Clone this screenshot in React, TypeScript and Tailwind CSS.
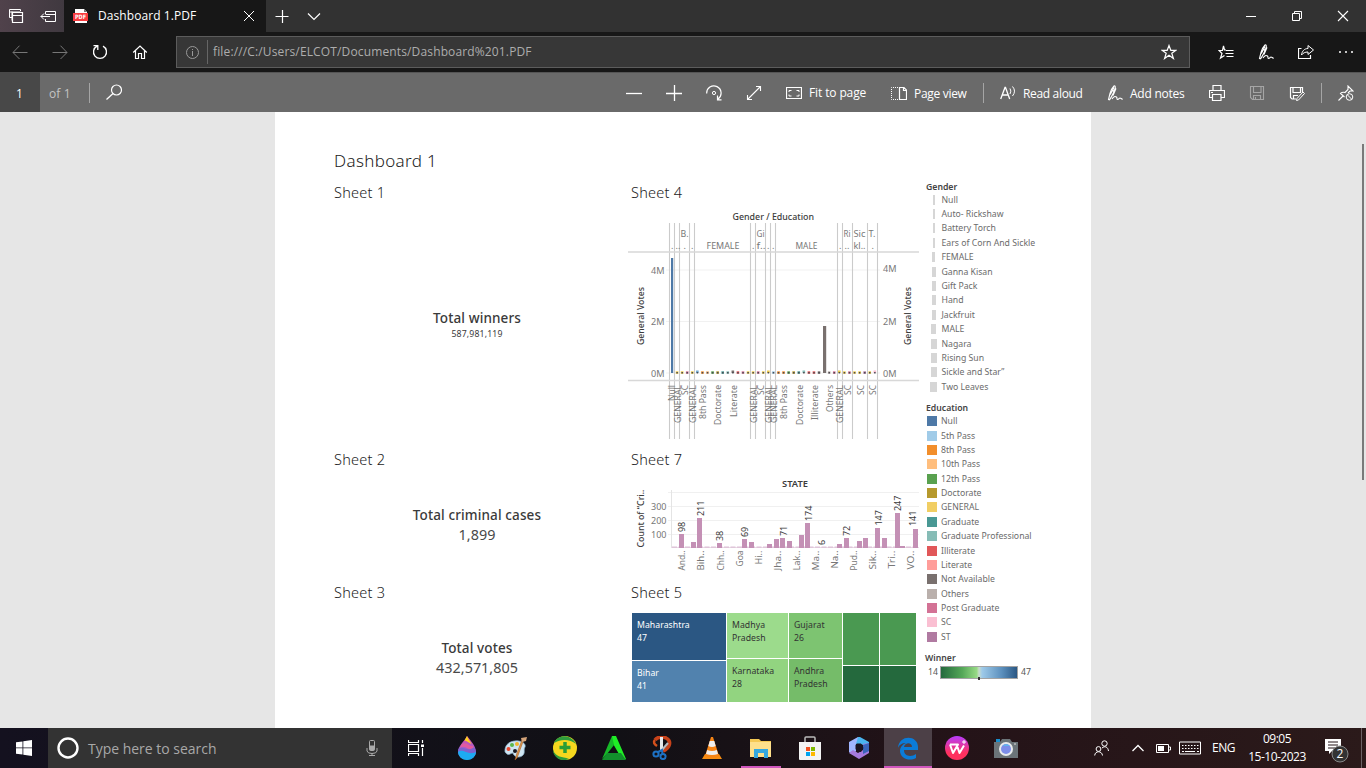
import React from "react";

type Kids = { children?: React.ReactNode };

function Ico({ s = 16, c = "", children }: Kids & { s?: number; c?: string }) {
  return (
    <svg width={s} height={s} viewBox={`0 0 ${s} ${s}`} className={`block shrink-0 ${c}`} fill="none" stroke="currentColor" strokeWidth={1}>
      {children}
    </svg>
  );
}

function PenIcon() {
  return (
    <Ico>
      <path d="M2.5 15 L1.5 14.5 L3 8.5 C4 5 5.500 2.500 7 1 C8.500 .5 8.500 2.500 8 4 C7 7.500 5 11 2.500 15 M3.300 9.500 L7 2.500 M6 6.500 L9 3.500 L6 10.500 M5 14 C6.500 11.500 8 11 9.500 12 C10.500 13 9.500 14.500 10.500 14.500 C12 14.500 12 13 13 13 C14 13 14.500 14.500 15.700 14" strokeWidth="1.1" />
    </Ico>
  );
}

function TabBar() {
  return (
    <div className="flex h-8 items-center bg-[#323232] text-white">
      <div className="flex h-8 w-16 items-center bg-gradient-to-r from-[#50424b] to-[#403940] pl-2">
        <Ico>
          <path d="M4.500 9.500 H1.500 V1.500 H12.500 V3 M1.500 4 H12.500 M4 3.500 V12.500 H4.500" />
          <path d="M4.500 4.500 H14.500 V14.500 H4.500 Z M4.500 7.500 H14.500" strokeWidth="1.2" />
        </Ico>
        <Ico c="ml-4">
          <path d="M5.500 6 V3.500 H15.500 V13.500 H5.500 V11 M5.500 6.500 H15.500 M.7 8.500 H10 M4 5.500 L1 8.500 L4 11.500" />
        </Ico>
      </div>
      <div className="flex h-8 w-[202px] items-center bg-[#171717] pl-[9px]">
        <svg width="16" height="16" viewBox="0 0 16 16">
          <path d="M2 1 H11 L14 4 V15 H2Z" fill="#fff" />
          <path d="M11 1 V4 H14" fill="#777" />
          <rect x="0" y="5" width="15" height="8" fill="#f93b3e" />
          <text x="2" y="11.300" fontSize="6" fontWeight="700" fontFamily="DejaVu Sans" fill="#fff" textLength="11" lengthAdjust="spacingAndGlyphs">PDF</text>
        </svg>
        <span className="ml-[9px] w-[145px] whitespace-nowrap text-[12px] leading-8 tracking-[0.08px]">Dashboard 1.PDF</span>
        <Ico s={12}><path d="M1 1 L11 11 M11 1 L1 11" /></Ico>
      </div>
      <Ico c="ml-2"><path d="M1.500 8.500 H14.500 M8.500 2 V15" strokeWidth="1.200" /></Ico>
      <Ico c="ml-4"><path d="M2 5.500 L8 11.500 L14 5.500" strokeWidth="1.200" /></Ico>
      <div className="flex-1" />
      <div className="flex items-center gap-[34px] pr-[17px]">
        <Ico s={12}><path d="M1 6.500 H11" /></Ico>
        <Ico s={12}><path d="M1.500 3.500 H8.500 V10.500 H1.500Z M3.500 3 V1.500 H10.500 V8.500 H9" /></Ico>
        <Ico s={12}><path d="M1 1 L11 11 M11 1 L1 11" strokeWidth="1.100" /></Ico>
      </div>
    </div>
  );
}

function NavBar() {
  return (
    <div className="flex h-10 items-center bg-[#171717] pl-3 text-white">
      <div className="flex w-[164px] gap-6">
        <Ico c="text-[#777]"><path d="M1 8.500 H15.500 M7.500 1.700 L1 8.500 L7.500 15" /></Ico>
        <Ico c="text-[#777]"><path d="M.5 8.500 H15 M8.500 1.700 L15 8.500 L8.500 15" /></Ico>
        <Ico><path d="M5 2.200 A6.500 6.500 0 1 0 11 2.200 M1.500 1.700 H5.800 V6" strokeWidth="1.300" /></Ico>
        <Ico><path d="M1.200 8.500 L8 2 L14.800 8.500 M3.500 6.500 V14.500 H6.500 V9.500 H9.500 V14.500 H12.500 V6.500" strokeWidth="1.200" /></Ico>
      </div>
      <div className="flex h-8 w-[1014px] items-center border border-[#5c5c5c] bg-[#373737] pl-2">
        <Ico s={15} c="text-[#999]"><circle cx="7.500" cy="7.500" r="6" /><path d="M7.500 6 V11 M7.500 4 V5" /></Ico>
        <div className="ml-[7px] h-6 w-px bg-[#666]" />
        <span className="ml-[5px] flex-1 text-[12px] tracking-[0.14px] text-[#adadad]">file:///C:/Users/ELCOT/Documents/Dashboard%201.PDF</span>
        <Ico c="mr-3"><path d="M8 1.500 L9.800 6.300 H15 L10.800 9.300 L12.400 14.500 L8 11.300 L3.600 14.500 L5.200 9.300 L1 6.300 H6.200Z" strokeWidth="1.200" /></Ico>
      </div>
      <div className="ml-7 flex items-center gap-6">
        <Ico>
          <path d="M8 6 H6.500 L5.500 2 L4.500 6.500 H1 L4 9.500 L2.500 14 L6.500 11.500" strokeWidth="1.200" />
          <path d="M8 6.500 H15.500 M7.500 9.500 H15.500 M8.500 12.500 H15.500" strokeWidth="1.200" />
        </Ico>
        <PenIcon />
        <Ico>
          <path d="M3.500 4.500 H.5 V14.500 H12.500 V11" strokeWidth="1.200" />
          <path d="M3.500 11 C4 7 6.500 4.500 10 4.500 V1.500 L15.500 6 L10 10.500 V8 C7 8 5 9 3.500 11Z" />
        </Ico>
        <Ico><path d="M1 8 H3 M7 8 H9 M13 8 H15" strokeWidth="1.500" /></Ico>
      </div>
    </div>
  );
}

function PdfBar() {
  return (
    <div className="flex h-10 items-center bg-[#6a6a6a] text-[12px] text-white shadow-[inset_0_1px_0_#555]">
      <div className="flex h-10 w-10 items-center justify-center bg-[#484848] pr-px pt-[3px]">1</div>
      <span className="ml-[9px] w-10 pt-[3px] tracking-[0.15px] text-[#c4c4c4]">of 1</span>
      <div className="mt-[2px] h-5 w-px bg-[#a5a5a5]" />
      <Ico c="ml-4"><circle cx="10.500" cy="6" r="5" strokeWidth="1.200" /><path d="M7 9.500 L.5 15.500" strokeWidth="1.300" /></Ico>
      <div className="flex-1" />
      <div className="mt-[2px] flex items-center gap-6">
        <Ico><path d="M0 8.500 H16" strokeWidth="1.300" /></Ico>
        <Ico><path d="M0 8.500 H16 M8.500 0 V16" strokeWidth="1.300" /></Ico>
        <Ico>
          <path d="M.7 8.500 A7.200 7.200 0 1 1 12 14 M11.500 10.500 V14.800 H15.500" strokeWidth="1.200" />
          <circle cx="8" cy="8" r="1.600" />
        </Ico>
        <Ico><path d="M1.500 14.500 L14.500 1.500 M10 1.500 H14.500 V6 M1.500 10 V14.500 H6" strokeWidth="1.100" /></Ico>
        <Ico>
          <path d="M.5 2.500 H15.500 V13.500 H.5Z" strokeWidth="1.200" />
          <path d="M3 7 V5.500 H5.500 M10.500 5.500 H13 V7 M3 9.500 V11 H5.500 M10.500 11 H13 V9.500" />
        </Ico>
      </div>
      <span className="ml-[7px] mt-[2px] w-[82px] tracking-[-0.12px]">Fit to page</span>
      <Ico c="mt-[2px]">
        <path d="M7 2.500 H.5 V14.500 H7" strokeDasharray="1 1" />
        <path d="M8.500 2.500 H13 L15.500 5 V14.500 H8.500Z M12.500 2.500 V5.500 H15.500" strokeWidth="1.200" />
      </Ico>
      <span className="ml-[7px] mt-[4px] w-[69px] tracking-[-0.3px]">Page view</span>
      <div className="mt-[2px] h-5 w-px bg-[#a5a5a5]" />
      <Ico c="ml-4 mt-[2px]">
        <path d="M.7 14 L5 2.500 H5.500 L9.700 14 M2.300 10 H8.200" strokeWidth="1.300" />
        <path d="M10 3.500 Q11.700 6 10 9 M12.500 1.500 Q16.500 6 12.500 11" />
      </Ico>
      <span className="ml-[7px] mt-[4px] w-[84px] tracking-[-0.33px]">Read aloud</span>
      <div className="mt-[2px]"><PenIcon /></div>
      <span className="ml-[7px] mt-[4px] w-[79px] tracking-[-0.25px]">Add notes</span>
      <div className="mt-[2px] flex items-center gap-6">
        <Ico><path d="M4 5.500 V.5 H12 V5.500 M3.500 12.500 H.5 V5.500 H15.500 V12.500 H12 M3.500 9.500 H12 V15.500 H3.500Z M2 7.500 H4" strokeWidth="1.200" /></Ico>
        <Ico c="text-[#a5a5a5]"><path d="M1.500 1.500 H14.500 V14.500 H3.500 L1.500 12.500Z M4.500 1.500 V7.500 H12 V1.500 M4.500 14.500 V10.500 H11.500 V14.500 M6.500 12 V14.500" strokeWidth="1.100" /></Ico>
        <Ico>
          <path d="M13.500 7 V2.500 H1.500 V12.500 L3 14 H7 M4 2.500 V7.500 H11.500 V2.500 M4.500 14 V10.500 H9" strokeWidth="1.200" />
          <path d="M14 7 L15.500 8.500 L9.500 15 L7.500 15.500 L8 13.500Z" />
        </Ico>
      </div>
      <div className="ml-4 mt-[2px] h-5 w-px bg-[#a5a5a5]" />
      <Ico c="ml-4 mr-3 mt-[2px]">
        <path d="M.5 15.500 L5 11 M6.500 12 L2.500 8.500 C4 7 5.500 7 7 7.500 L10 4.500 V1 L15 6 H12 L10 8" strokeWidth="1.100" />
        <circle cx="11.500" cy="12" r="3.300" /><path d="M9.300 9.800 L13.700 14.200" />
      </Ico>
    </div>
  );
}

type Txt = { t: string; x: number; y: number; len?: number; size?: number; fill?: string; weight?: number };
const V = ({ t, x, y, len, size = 9, fill = "#777", weight, anchor = "start" }: Txt & { anchor?: "start" | "end" }) => (
  <text transform={`translate(${x} ${y}) rotate(-90)`} fontSize={size} fill={fill} fontWeight={weight} textAnchor={anchor} textLength={len} lengthAdjust="spacingAndGlyphs">{t}</text>
);
const H = ({ t, x, y, len, size = 9, fill = "#777", weight }: Txt) => (
  <text x={x} y={y} fontSize={size} fill={fill} fontWeight={weight} textLength={len} lengthAdjust="spacingAndGlyphs">{t}</text>
);

const dividers = [669.5, 674.5, 679.5, 689.5, 694.5, 750.5, 755.5, 765.5, 770.5, 775.5, 837.5, 842.5, 852.5, 867.5, 877.5];
const dotColors = "#4e79a7 #edc948 #edc948 #d37295 #edc948 #6fa8d0 #f28e2b #f0b070 #59a14f #b6992d #499894 #86bcb6 #79706e #e15759 #d37295 #edc948 #edc948 #d37295 #edc948 #edc948 #a0cbe8 #f28e2b #f28e2b #59a14f #b6992d #499894 #86bcb6 #e15759 #e15759 #79706e #79706e #bab0ac #d37295 #edc948 #edc948 #d37295 #edc948 #edc948 #b07aa1 #edc948 #fabfd2".split(" ");
const eduTicks: [string, number, number][] = [
  ["Null", 675, 16], ["GENERAL", 681, 38], ["SC", 688, 10], ["GENERAL", 695.5, 38], ["8th Pass", 706, 34], ["Doctorate", 721, 40], ["Literate", 737, 32],
  ["GENERAL", 756.5, 38], ["SC", 764, 10], ["GENERAL", 771.5, 38], ["GENERAL", 777, 38], ["8th Pass", 787, 34], ["Doctorate", 802.5, 40], ["Illiterate", 818, 35],
  ["Others", 833, 27], ["GENERAL", 843, 38], ["SC", 850.5, 10], ["SC", 863.5, 10], ["SC", 876, 10],
];
const heads: [string, number, number, number?][] = [
  [".", 671, 249], ["..", 675.5, 249], ["B.", 680.5, 236.5, 8], [".", 683.5, 249], [".", 691, 249], ["FEMALE", 706.5, 249, 33], [".", 752, 249],
  ["Gi", 756.5, 236.5, 8], ["f..", 756.5, 249, 9], [".", 767, 249], [".", 772, 249], ["MALE", 795.5, 249, 22], [".", 839, 249],
  ["Ri", 843.5, 236.5, 7], ["..", 844.5, 249], ["Sic", 853.5, 236.5, 12], ["kl..", 853.5, 249, 12], ["T.", 868.5, 236.5, 7], [".", 871.5, 249],
];
const votesAxis: [string, number, number][] = [["4M", 651, 274], ["2M", 651, 325], ["0M", 651, 377], ["4M", 883, 272], ["2M", 883, 324.5], ["0M", 883, 377]];

function VotesChart() {
  return (
    <svg width="294" height="245" viewBox="628 204 294 245" className="block font-['Noto_Sans']">
      <H t="Gender / Education" x={732.5} y={220} len={81.5} fill="#3c3c3c" weight={500} size={9} />
      {[270, 321.5, 373].map((y) => <line key={y} x1="666" x2="880" y1={y} y2={y} stroke="#f1f1f1" />)}
      {dividers.map((x) => <line key={x} x1={x} x2={x} y1="223" y2="439" stroke="#cbcbcb" strokeWidth={1.1} />)}
      <path d="M628 252 H919 M628 380.500 H919" stroke="#d8d8d8" strokeWidth="1.600" />
      <rect x="671" y="258" width="2.200" height="115" fill="#4e79a7" />
      <rect x="823" y="326" width="3.200" height="47" fill="#79706e" />
      {dotColors.map((c, i) => i === 0 || i === 30 ? null : (
        <g key={i}>
          <rect x={670.7 + i * 5.07} y={371.3 + (i % 7 === 5 ? -0.8 : 0)} width="2.600" height="2.500" fill={c} />
          <rect x={671.3 + i * 5.07} y="372" width="1.500" height="1.500" fill="#4b4b52" />
        </g>
      ))}
      {heads.map(([t, x, y, l], i) => <H key={i} t={t} x={x} y={y} len={l} />)}
      {eduTicks.map(([t, x, l], i) => <V key={i} t={t} x={x} y={385} len={l} anchor="end" />)}
      {votesAxis.map(([t, x, y], i) => <H key={i} t={t} x={x} y={y} len={13.5} />)}
      <V t="General Votes" x={644} y={345} len={58} fill="#3c3c3c" weight={500} />
      <V t="General Votes" x={911} y={345} len={58} fill="#3c3c3c" weight={500} />
    </svg>
  );
}

const stateBars: [number, number][] = [
  [679, 534], [691, 542], [697, 518], [717, 543], [742, 539], [749, 542], [767, 544], [774, 539], [780, 538], [787, 541], [799, 535], [805, 523],
  [837, 544], [844, 538], [857, 541], [863, 538], [875, 528], [882, 538], [895, 513], [900, 546], [913, 529],
];
const stateVals: [string, number, number][] = [
  ["98", 685, 532], ["211", 704, 516], ["38", 723, 541], ["69", 748, 537], ["71", 786.5, 536], ["174", 812, 521], ["6", 825, 545], ["72", 850, 536], ["147", 881.5, 525.5], ["247", 901, 511], ["141", 916, 526],
];
const stateTicks: [string, number, number][] = [
  ["And..", 685, 20], ["Bih..", 704, 20], ["Chh..", 723.5, 20], ["Goa", 742.5, 16], ["Hi..", 761.5, 14], ["Jha..", 780.5, 20], ["Lak..", 799.5, 20], ["Ma..", 818.5, 20], ["Na..", 838, 18], ["Pud..", 857, 20], ["Sik..", 875.5, 19], ["Tri..", 894.5, 18], ["VO..", 914, 19],
];

function StateChart() {
  return (
    <svg width="294" height="111" viewBox="628 471 294 111" className="block font-['Noto_Sans']">
      <H t="STATE" x={782} y={487} len={26} fill="#3c3c3c" weight={600} />
      {[492.5, 506.5, 520.5, 534.5].map((y) => <line key={y} x1="668" x2="919" y1={y} y2={y} stroke="#f0f0f0" />)}
      <path d="M671.500 490 V548" stroke="#e4e4e4" />
      <path d="M671 547.500 H919" stroke="#eadbe6" />
      <path d="M672 547 H917" stroke="#c898bd" strokeWidth="1" strokeDasharray="5 1.500" opacity=".6" />
      {stateBars.map(([x, y]) => <rect key={x} x={x} y={y} width="5" height={548 - y} fill="#c490b5" />)}
      {stateVals.map(([t, x, y]) => <V key={t} t={t} x={x} y={y} size={9.5} len={t.length * 5.1} fill="#3c3c3c" />)}
      {stateTicks.map(([t, x, l]) => <V key={t} t={t} x={x} y={550.5} len={l} anchor="end" />)}
      <H t="300" x={651} y={510} len={15.5} size={9.5} /><H t="200" x={651} y={524} len={15.5} size={9.5} /><H t="100" x={651} y={538} len={15.5} size={9.5} />
      <V t="Count of “Cri.." x={644} y={547.5} len={58} fill="#3c3c3c" weight={500} />
    </svg>
  );
}

function Cell({ c, children }: Kids & { c: string }) {
  return <div className={`whitespace-pre pl-[5px] pt-[6px] text-[8.7px] leading-[13px] tracking-[0.05px] ${c}`}>{children}</div>;
}

function Treemap() {
  return (
    <div className="ml-1 mt-[10px] flex h-[89px] w-[284px] gap-px">
      <div className="flex w-[94px] flex-col gap-px text-white">
        <Cell c="h-[47px] bg-[#2b5783]">{"Maharashtra\n47"}</Cell><Cell c="flex-1 bg-[#5182ae]">{"Bihar\n41"}</Cell>
      </div>
      <div className="flex w-[61px] flex-col gap-px text-[#333]">
        <Cell c="h-[45px] bg-[#9cdb8c]">{"Madhya\nPradesh"}</Cell><Cell c="flex-1 bg-[#92d480]">{"Karnataka\n28"}</Cell>
      </div>
      <div className="flex w-[53px] flex-col gap-px text-[#333]">
        <Cell c="h-[45px] bg-[#7dc471]">{"Gujarat\n26"}</Cell><Cell c="flex-1 bg-[#75bc69]">{"Andhra\nPradesh"}</Cell>
      </div>
      <div className="grid flex-1 grid-cols-2 grid-rows-[52px_36px] gap-px">
        <div className="bg-[#4a9951]" /><div className="bg-[#4a9951]" /><div className="bg-[#24693d]" /><div className="bg-[#24693d]" />
      </div>
    </div>
  );
}

function SheetTitle({ children }: Kids) {
  return <h2 className="h-[21px] text-[14.500px] font-light leading-[20px] tracking-[0.250px] text-[#1c1c1c]">{children}</h2>;
}

const genders: [string, string][] = [
  ["Null", "w-[2px]"], ["Auto- Rickshaw", "w-[2px]"], ["Battery Torch", "w-[2px]"], ["Ears of Corn And Sickle", "w-[2px]"], ["FEMALE", "w-[3px]"], ["Ganna Kisan", "w-[4px]"], ["Gift Pack", "w-[4px]"],
  ["Hand", "w-[4px]"], ["Jackfruit", "w-[4px]"], ["MALE", "w-[5px]"], ["Nagara", "w-[6px]"], ["Rising Sun", "w-[6px]"], ["Sickle and Star”", "w-[6px]"], ["Two Leaves", "w-[7px]"],
];
const education: [string, string][] = [
  ["Null", "bg-[#4e79a7]"], ["5th Pass", "bg-[#a0cbe8]"], ["8th Pass", "bg-[#f28e2b]"], ["10th Pass", "bg-[#ffbe7d]"], ["12th Pass", "bg-[#59a14f]"], ["Doctorate", "bg-[#b6992d]"], ["GENERAL", "bg-[#f1ce63]"], ["Graduate", "bg-[#499894]"],
  ["Graduate Professional", "bg-[#86bcb6]"], ["Illiterate", "bg-[#e15759]"], ["Literate", "bg-[#ff9d9a]"], ["Not Available", "bg-[#79706e]"], ["Others", "bg-[#bab0ac]"], ["Post Graduate", "bg-[#d37295]"], ["SC", "bg-[#fabfd2]"], ["ST", "bg-[#b07aa1]"],
];

function Legends() {
  return (
    <div className="text-[8.700px] text-[#6b6b6b]">
      <h3 className="h-3 pl-1 text-[8.700px] font-semibold leading-3 text-[#444]">Gender</h3>
      {genders.map(([t, w]) => (
        <div key={t} className="flex h-[14.400px] items-center">
          <div className="ml-1 flex w-[15px] justify-center"><div className={`h-[10px] bg-[#d6d6d6] ${w}`} /></div>
          <span className="pl-[0.500px] leading-[14px]">{t}</span>
        </div>
      ))}
      <h3 className="mt-[8px] h-3 pl-1 text-[8.700px] font-semibold leading-3 text-[#444]">Education</h3>
      {education.map(([t, c]) => (
        <div key={t} className="flex h-[14.380px] items-center pl-[5px]">
          <div className={`h-[10px] w-[10px] ${c}`} />
          <span className="ml-[4px] leading-[14px]">{t}</span>
        </div>
      ))}
      <h3 className="mt-[8px] h-3 pl-[3px] text-[8.700px] font-semibold leading-3 text-[#444]">Winner</h3>
      <div className="mt-[2px] flex h-[13px] items-center pl-[6px]">
        <span className="w-3 leading-3 text-[#555]">14</span>
        <div className="relative h-[13px] w-[78px] border border-[#a3a3a3] bg-[linear-gradient(90deg,#24693d,#55a858_28%,#97da85_47%,#c9dccb_50%,#9ecae9_54%,#5b8fbd_80%,#2a5783)]">
          <div className="absolute left-[37px] top-[10px] h-[3px] w-[2px] bg-[#333]" />
        </div>
        <span className="ml-[3px] leading-3 text-[#555]">47</span>
      </div>
    </div>
  );
}

function Total({ label, value, c, v }: { label: string; value: string; c: string; v: string }) {
  return (
    <div className={`w-[286px] text-center text-[#3a3a3a] ${c}`}>
      <div className="h-[18px] text-[13.500px] font-medium leading-[18px] tracking-[0.120px]">{label}</div>
      <div className={v}>{value}</div>
    </div>
  );
}

function Document() {
  return (
    <main className="flex h-[616px] justify-center bg-[#e6e6e6]">
      <div className="w-[275px]" />
      <div className="h-full w-[816px] bg-white pl-[59px] font-['Noto_Sans']">
        <h1 className="mt-[38px] h-8 text-[17px] font-light leading-[22px] tracking-[0.350px] text-[#1c1c1c]">Dashboard 1</h1>
        <div className="grid grid-cols-[294px_294px_1fr]">
          <div>
            <section className="h-[267px]"><SheetTitle>Sheet 1</SheetTitle><Total label="Total winners" value="587,981,119" c="mt-[106px]" v="pt-px text-[8.700px] leading-[13px] tracking-[0.150px]" /></section>
            <section className="h-[133px]"><SheetTitle>Sheet 2</SheetTitle><Total label="Total criminal cases" value="1,899" c="mt-[36px]" v="text-[14.400px] leading-[21px] text-[#4a4a4a]" /></section>
            <section><SheetTitle>Sheet 3</SheetTitle><Total label="Total votes" value="432,571,805" c="mt-[36px]" v="text-[14.400px] leading-[21px] text-[#4a4a4a]" /></section>
          </div>
          <div>
            <section className="h-[267px]"><div className="h-[22px] pl-[3px]"><SheetTitle>Sheet 4</SheetTitle></div><VotesChart /></section>
            <section className="h-[133px]"><div className="h-[22px] pl-[3px]"><SheetTitle>Sheet 7</SheetTitle></div><StateChart /></section>
            <section><div className="pl-[3px]"><SheetTitle>Sheet 5</SheetTitle></div><Treemap /></section>
          </div>
          <div className="-mt-[1.500px]"><Legends /></div>
        </div>
      </div>
      <div className="flex w-[275px] justify-end pr-[2px] pt-8"><div className="h-[336px] w-[2px] bg-[#7a7a7a]" /></div>
    </main>
  );
}

function App24({ children, c = "" }: Kids & { c?: string }) {
  return <div className={`flex h-10 w-[49.050px] shrink-0 items-center justify-center ${c}`}><svg width="24" height="24" viewBox="0 0 24 24">{children}</svg></div>;
}

function TaskBar() {
  return (
    <footer className="flex h-10 items-center bg-[linear-gradient(90deg,#14111f,#111015_45%,#241318_70%,#2b1a1a)] text-white">
      <div className="flex h-10 w-12 items-center justify-center">
        <svg width="16" height="16" viewBox="0 0 16 16" fill="#fff"><path d="M0 2.300 L6.500 1.400 V7.500 H0Z M7.300 1.200 L16 0 V7.500 H7.300Z M0 8.300 H6.500 V14.600 L0 13.700Z M7.300 8.300 H16 V16 L7.300 14.800Z" /></svg>
      </div>
      <div className="flex h-10 w-[344px] items-center bg-[#333] pl-[9px]">
        <svg width="22" height="22" viewBox="0 0 22 22"><circle cx="11" cy="11" r="9.500" fill="none" stroke="#fff" strokeWidth="2.400" /></svg>
        <span className="ml-[9px] flex-1 pt-[2px] text-[14px] leading-[38px] tracking-[-0.020px] text-[#a8a8a8]">Type here to search</span>
        <Ico c="mr-[12px] text-[#aaa]"><rect x="5.500" y=".5" width="5" height="10" rx="1" /><path d="M6 6 H10 V10 H6Z" fill="currentColor" /><path d="M3 8 V11 Q3.500 13.500 8 13.500 Q12.500 13.500 13 11 V8 M8 13 V15.500 M5 15.500 H11" /></Ico>
      </div>
      <div className="flex h-10 w-[50px] items-center justify-center pr-[2px]">
        <Ico><path d="M.5 0 V2.500 H10.500 V0 M.5 4.500 H10.500 V11.500 H.5Z M.5 16 V13.500 H10.500 V16 M14.500 0 V3 M14.500 8 V16" strokeWidth="1.200" /><path d="M13 4.500 H16 V7 H13Z" fill="#fff" stroke="none" /></Ico>
      </div>
      <App24>
        <defs><linearGradient id="drop" x1="0" y1="0" x2="0" y2="1"><stop offset="0" stopColor="#e64f9e" /><stop offset=".6" stopColor="#9560d6" /><stop offset="1" stopColor="#12b5f5" /></linearGradient></defs>
        <path d="M12 0 C15 4 21 10 21 16 A9 8 0 0 1 3 16 C3 10 9 6 12 0Z" fill="url(#drop)" />
        <path d="M12 0 C13 3 15 5 16.500 8 C14 7 12 5 9.500 4.500Z" fill="#ffd21d" />
        <path d="M6 9 C11 4 14 11 18 10 L20 14 C14 16 10 8 5 12Z" fill="#e25a9f" />
        <path d="M3.500 13 C8 9 12 17 19.500 11 L21 16 C14 21 8 12 3 16Z" fill="#7d62cf" /><path d="M3 16 C8 12 13 20 21 16 C20 26 4 26 3 16Z" fill="#1cabf2" />
      </App24>
      <App24>
        <path d="M1 16 C0 8 7 4 15 5 C20 6 22 9 21 11 C19 14 22 17 18 20 C13 23 9 19 9 17 C6 17 5 21 1 16Z" fill="#cfe5f2" stroke="#8ab2cc" strokeWidth=".7" />
        <circle cx="4.500" cy="13" r="2" fill="#e84830" /><circle cx="8" cy="9" r="2" fill="#59b84a" /><circle cx="13" cy="8" r="2" fill="#f3b52d" /><circle cx="11" cy="15" r="2" fill="#171720" />
        <path d="M20 3 L13 22 L11 24 L13 17 L18 4Z" fill="#df9952" stroke="#a55e24" strokeWidth=".6" /><path d="M17 2 L23 1 L22 5 L18 6Z" fill="#d5a47a" />
      </App24>
      <App24><circle cx="12" cy="12" r="12" fill="#f5d71e" /><path d="M1 7 C5 -2 18 -2 23 8 C17 3 8 3 1 7Z M0 14 C3 22 9 20 16 23 C7 27 0 20 0 14Z" fill="#2f9c3c" /><path d="M12 6 V17 M6.500 11.500 H17.500" stroke="#2a9d36" strokeWidth="3.500" /></App24>
      <App24><path d="M10 0 L14 0 L24 23 H14 L17 18 L10 6Z" fill="#1fee26" /><path d="M10 0 L0 23 L5 18 L12 9Z" fill="#16b928" /><path d="M0 24 L5 17 H19 L24 24Z" fill="#128f2c" /><path d="M11.500 11 L15 17 H8Z" fill="#111015" /></App24>
      <App24>
        <path d="M4 4 C6 1 12 0 15 2 C21 5 19 12 12 15" fill="none" stroke="#c8421a" strokeWidth="3.600" /><path d="M4 4 C2 6 3 8 6 10" stroke="#d4501c" strokeWidth="2.500" fill="none" />
        <path d="M10.500 1 V14" stroke="#e6e9eb" strokeWidth="3" fill="none" /><path d="M17 7 L10 15" stroke="#b6bbc0" strokeWidth="2" />
        <circle cx="5" cy="18" r="2.600" fill="none" stroke="#1d71c4" strokeWidth="2" /><circle cx="12" cy="20.500" r="2.600" fill="none" stroke="#1d71c4" strokeWidth="2" /><path d="M7 16 L11 14 L11.500 18" stroke="#1d71c4" strokeWidth="2" fill="none" />
      </App24>
      <App24><path d="M5 18 H19 L22 23 H2Z" fill="#f78d12" /><path d="M11 1 H13 L19 20 Q12 23 5 20Z" fill="#f58416" /><path d="M9.700 5 H14.300 L15.700 10 Q12 12 8.300 10Z M7.200 14 Q12 16 16.800 14 L18 18 Q12 20 6 18Z" fill="#eee" /></App24>
      <App24 c="bg-[linear-gradient(90deg,#cf56bd,#cf56bd)] bg-[length:40px_2px] bg-bottom bg-no-repeat">
        <path d="M1 3 H10 L12 5 H22 V21 H1Z" fill="#f5c954" /><path d="M1 6 H22 V21 H1Z" fill="#fee08b" /><path d="M5 22 V13 H19 V22 H15 V17 H9 V22Z" fill="#35a8df" />
      </App24>
      <App24><path d="M7 7 V2 Q7 1 8 1 H16 Q17 1 17 2 V7" fill="none" stroke="#bbb" strokeWidth="1.500" /><path d="M1 6 H23 V23 Q23 24 22 24 H2 Q1 24 1 23Z" fill="#f4f4f4" /><path d="M8 11 H12 V15 H8Z" fill="#f25022" /><path d="M13 11 H17 V15 H13Z" fill="#7fba00" /><path d="M8 16 H12 V20 H8Z" fill="#00a4ef" /><path d="M13 16 H17 V20 H13Z" fill="#ffb900" /></App24>
      <App24><path d="M11 1 L16 4 L9 8 V15 L6 19 L2 16 V6Z" fill="#a0b6ff" /><path d="M11 1 L13 1 L22 6 V12 L14 8 L9 8Z" fill="#49b5ef" /><path d="M22 7 V17 L12 23 L2 17 L6 14 L11 17 L16 14 V8Z" fill="#a57add" /><path d="M16 9 L22 7 V15 L16 18Z" fill="#3965ba" /><path d="M8.500 9 L10 7.500 H14 L16.500 12 L14 16 H10.500 L8.500 13Z" fill="#1b1421" /></App24>
      <App24 c="bg-[linear-gradient(#cf56bd,#cf56bd),linear-gradient(#4c4047,#4c4047)] bg-[length:48px_2px,48px_40px] bg-[position:bottom,center] bg-no-repeat">
        <path d="M2 12 C3 -2 22 -1 22 11 V14 H8 C8 21 16 21 20 18 V22 C13 26 4 22 4 15 C4 11 7 8 10 7 C6 7 3 9 2 12Z M8 11 H16 C16 6 9 6 8 11Z" fill="#0b7cd8" fillRule="evenodd" />
      </App24>
      <App24>
        <defs><linearGradient id="wps" x1="0" y1="0" x2="0" y2="1"><stop stopColor="#b73cff" /><stop offset=".7" stopColor="#ff315e" /></linearGradient></defs>
        <circle cx="12" cy="12" r="12" fill="url(#wps)" /><path d="M5 8.500 L8 17 L13 8.500 H9 M12.500 11 L14.500 17 L19 9.500" fill="none" stroke="#fff" strokeWidth="2" strokeLinejoin="round" /><path d="M5 8.500 H9" stroke="#fff" strokeWidth="2" /><path d="M19 4 V8 M17 6 H21" stroke="#fff" strokeWidth="1" />
      </App24>
      <App24><path d="M2 3 H6 V6 H2Z" fill="#188dcc" /><path d="M0 6 H6 L8 3 H16 L18 6 H24 V22 H0Z" fill="#6b7479" /><circle cx="12" cy="13" r="7" fill="#e8ebed" /><circle cx="12" cy="13" r="5" fill="#7d8de9" /><path d="M8.500 10 A5 5 0 0 1 16 10Z" fill="#5fb4eb" /><path d="M20 8 H22" stroke="#ddd" /></App24>
      <div className="flex-1" />
      <Ico c="mr-[22px]"><circle cx="10.500" cy="3.500" r="2.700" /><circle cx="4.500" cy="9" r="2.400" /><path d="M.7 15.500 C1 10.500 8 10.500 8.500 15.500 M8 8 C11 5.500 14 7 14.500 11" /></Ico>
      <Ico s={12} c="mr-[11px]"><path d="M.5 9 L6 3.500 L11.500 9" strokeWidth="1.300" /></Ico>
      <Ico c="mr-[7px]"><path d="M1.500 4.500 H13.500 V12.500 H1.500Z M14 7 H15.500 V10 H14" /><path d="M3 6 H9 V11 H3Z" fill="#fff" stroke="none" /></Ico>
      <svg width="24" height="14" viewBox="0 0 24 14" fill="none" stroke="#fff"><path d="M1.500 1 H22.500 V13 H1.500Z" /><path d="M4 4.500 H21 M4 7.500 H21" strokeDasharray="1.500 1.500" /><path d="M4 10.500 H6 M7 10.500 H17 M19 10.500 H21" /></svg>
      <span className="ml-[10px] w-[34px] text-[12px] tracking-[-0.500px]">ENG</span>
      <div className="w-[62px] text-center text-[12px] leading-[18px] tracking-[-0.500px]"><div>09:05</div><div>15-10-2023</div></div>
      <svg width="26" height="26" viewBox="0 0 26 26" className="ml-[16px] mr-[11px] mt-[4px]">
        <path d="M1 2 H17 V14 H8 L5 17 V14 H1Z" fill="#fff" /><path d="M4 5 H14 M4 8 H14 M4 11 H11" stroke="#241518" /><circle cx="16" cy="17" r="8" fill="#333" stroke="#888" /><text x="12.500" y="21.300" fill="#fff" fontSize="12" fontWeight="500">2</text>
      </svg>
      <div className="h-10 w-px bg-[#6b6265]" />
      <div className="w-1" />
    </footer>
  );
}

export default function App() {
  return (
    <div className="h-[768px] w-[1366px] overflow-hidden font-['Open_Sans',sans-serif]">
      <TabBar /><NavBar /><PdfBar /><Document /><TaskBar />
    </div>
  );
}
